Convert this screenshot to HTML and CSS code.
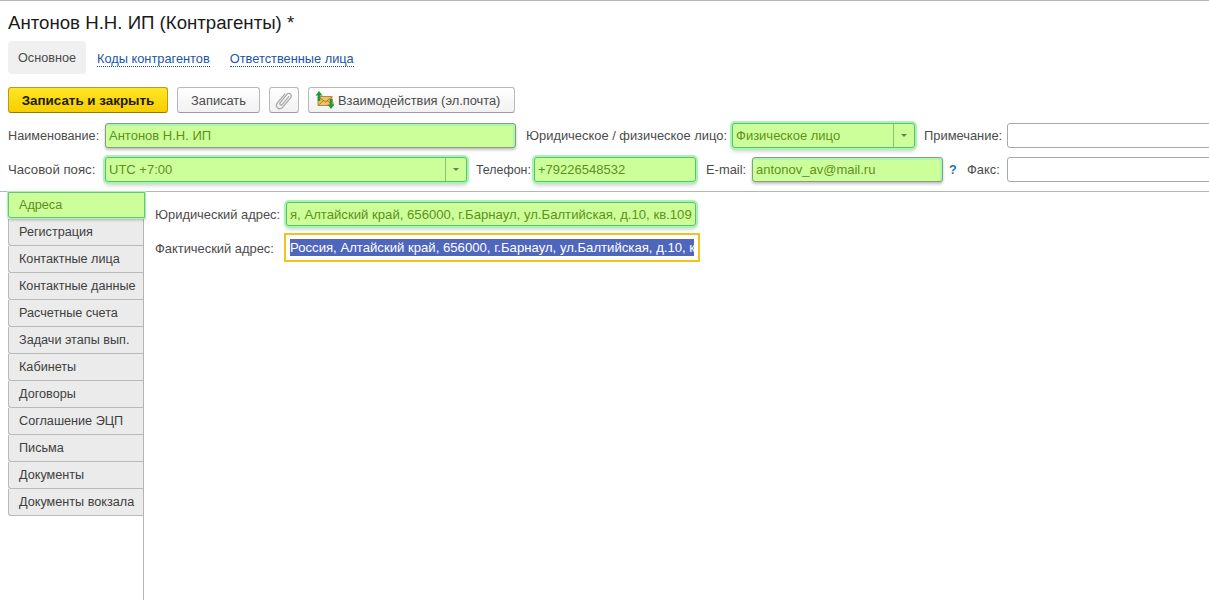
FILE: index.html
```html
<!DOCTYPE html>
<html lang="ru">
<head>
<meta charset="utf-8">
<title>Антонов Н.Н. ИП (Контрагенты)</title>
<link rel="stylesheet" href="styles.css">
</head>
<body>
<div class="page">
  <h1 class="title">Антонов Н.Н. ИП (Контрагенты) *</h1>
  <nav class="pages">
    <span class="page-tab">Основное</span>
    <a class="page-link link-a">Коды контрагентов</a>
    <a class="page-link link-b">Ответственные лица</a>
  </nav>
  <div class="toolbar">
    <button class="btn btn-primary">Записать и закрыть</button>
    <button class="btn btn-save">Записать</button>
    <button class="btn btn-clip" aria-label="Вложения">
      <svg width="20" height="20" viewBox="0 0 20 20" fill="none" stroke="#a9a9a9" stroke-width="1.3" stroke-linecap="round"><path d="M6.200 12.600 12.700 4.600c1-1.200 2.600-1.400 3.700-.5s1.200 2.500.2 3.700l-7.800 9.400c-1.500 1.800-3.800 2-5.200.8s-1.500-3.500 0-5.300l7.300-8.800"/><path d="M6.200 12.600c-.6.8-.5 1.700.1 2.200s1.500.4 2.100-.4l6.400-7.700"/></svg>
    </button>
    <button class="btn btn-mail">
      <svg width="22" height="20" viewBox="0 0 22 20"><path d="M4 6.500 17.500 6.500 19.500 15.500H4z" fill="#efc268" stroke="#b98a35"/><path d="M4 6.500l7.500 5.500 7-5.500M4 15.500l5.500-5M19 15.500l-6-5" fill="none" stroke="#a87a2c"/><path d="M5 1 1.500 5.500h2.300V11h2.500V5.500h2.300z" fill="#1f9a3c"/><path d="M17 19l3.500-4.500h-2.300V9h-2.500v5.500h-2.300z" fill="#1f9a3c"/></svg>
      <span>Взаимодействия (эл.почта)</span>
    </button>
  </div>
  <div class="form-row row-one">
    <label class="lbl lbl-name">Наименование:</label>
    <div class="field ok inner w-name"><span class="val">Антонов Н.Н. ИП</span></div>
    <label class="lbl lbl-type">Юридическое / физическое лицо:</label>
    <div class="field ok w-type"><span class="val">Физическое лицо</span><span class="drop"><i class="tri"></i></span></div>
    <label class="lbl lbl-note">Примечание:</label>
    <div class="field blank"></div>
  </div>
  <div class="form-row row-two">
    <label class="lbl lbl-tz">Часовой пояс:</label>
    <div class="field ok w-tz"><span class="val">UTC +7:00</span><span class="drop"><i class="tri"></i></span></div>
    <label class="lbl lbl-tel">Телефон:</label>
    <div class="field ok w-tel"><span class="val">+79226548532</span></div>
    <label class="lbl lbl-mail">E-mail:</label>
    <div class="field ok inner w-mail"><span class="val">antonov_av@mail.ru</span></div>
    <span class="help">?</span>
    <label class="lbl lbl-fax">Факс:</label>
    <div class="field blank"></div>
  </div>
  <div class="body">
    <ul class="side">
      <li class="side-item active">Адреса</li>
      <li class="side-item">Регистрация</li>
      <li class="side-item">Контактные лица</li>
      <li class="side-item">Контактные данные</li>
      <li class="side-item">Расчетные счета</li>
      <li class="side-item">Задачи этапы вып.</li>
      <li class="side-item">Кабинеты</li>
      <li class="side-item">Договоры</li>
      <li class="side-item">Соглашение ЭЦП</li>
      <li class="side-item">Письма</li>
      <li class="side-item">Документы</li>
      <li class="side-item">Документы вокзала</li>
    </ul>
    <div class="panel">
      <div class="addr-row addr-one">
        <label class="lbl addr-lbl">Юридический адрес:</label>
        <div class="field ok addr-field"><span class="val clip">я, Алтайский край, 656000, г.Барнаул, ул.Балтийская, д.10, кв.109</span></div>
      </div>
      <div class="addr-row addr-two">
        <label class="lbl addr-lbl">Фактический адрес:</label>
        <div class="field focus"><span class="clip-box"><span class="sel">Россия, Алтайский край, 656000, г.Барнаул, ул.Балтийская, д.10, кв.109</span></span></div>
      </div>
    </div>
  </div>
</div>
</body>
</html>
```
FILE: styles.css
```css
* { box-sizing: border-box; }
html, body { margin: 0; height: 100%; overflow: hidden; background: #fff; }
body { font-family: "Liberation Sans", Arial, sans-serif; font-size: 12.65px; color: #4b4b4b; }
.page { height: 600px; width: 1209px; border-top: 1px solid #b5b5b5; overflow: hidden; }
.title { margin: 0; padding: 11px 0 0 8px; height: 40px; font-size: 18.65px; line-height: 21px; font-weight: 400; color: #1a1a1a; }
.pages { display: flex; align-items: center; height: 33px; padding-left: 8px; }
.page-tab { width: 78px; height: 33px; line-height: 34px; text-align: center; background: #f0f0f0; border-radius: 4px; color: #4a4a4a; }
.page-link { font-size: 12.8px; color: #1c55a8; border-bottom: 1px dotted #1c55a8; line-height: 14px; margin-top: 3px; }
.link-a { margin-left: 11px; }
.link-b { margin-left: 20px; }
.toolbar { display: flex; height: 26px; margin-top: 13px; padding-left: 8px; }
.btn { height: 26px; padding: 1px 0 0; font: 12.85px "Liberation Sans", Arial, sans-serif; line-height: 25px; color: #4b4b4b; background: linear-gradient(#fff, #f1f1f1); border: 1px solid #b8b8b8; border-bottom-color: #9c9c9c; border-radius: 3px; display: flex; align-items: center; justify-content: center; }
.btn-primary { width: 160px; font-size: 13.4px; font-weight: 700; color: #1e1a00; background: linear-gradient(#ffe625, #f5cf00); border-color: #b99c11; border-bottom-color: #8f7b10; }
.btn-save { width: 83px; margin-left: 9px; }
.btn-clip { width: 30px; margin-left: 9px; padding: 0; }
.btn-mail { width: 207px; margin-left: 9px; gap: 2px; justify-content: flex-start; padding: 0 0 0 5px; }
.btn-mail span { padding-top: 1px; }
.form-row { display: flex; align-items: center; height: 26px; padding-left: 8px; width: 1400px; }
.row-one { margin-top: 9px; }
.row-two { margin-top: 8px; }
.lbl { font-size: 12.9px; padding-top: 1px; white-space: nowrap; color: #4b4b4b; flex: none; }
.lbl-name { font-size: 12.65px; width: 97px; }
.lbl-tz { font-size: 13.2px; width: 97px; }
.lbl-type { margin-left: 10px; width: 206px; }
.lbl-note { margin-left: 9px; width: 83px; }
.lbl-tel { font-size: 12.4px; margin-left: 9px; width: 58px; }
.lbl-mail { margin-left: 10px; width: 46px; }
.lbl-fax { margin-left: 10px; width: 40px; }
.help { margin-left: 6px; width: 8px; color: #1a76b8; font-weight: 700; padding-top: 1px; }
.field { flex: none; height: 25px; display: flex; align-items: center; border-radius: 3px; font-size: 13px; }
.ok { background: #ccff99; border: 1px solid #62bb72; box-shadow: 0 0 0 2px #a4f7b0, 0 3px 4px rgba(0,0,0,.22); color: #5f8f1c; }
.ok.inner { border-color: #8a9a84; box-shadow: inset 0 2px 0 #a8f9ae, inset -2px 0 0 #a8f9ae, 0 2px 3px rgba(0,0,0,.25); }
.blank { width: 300px; background: #fff; border: 1px solid #a8a8a8; }
.val { padding: 1px 0 0 3px; flex: 1; white-space: nowrap; }
.drop { width: 21px; height: 100%; border-left: 1px solid #93bf6c; display: flex; align-items: center; justify-content: center; }
.tri { width: 0; height: 0; border: 3px solid transparent; border-top: 3px solid #6c7f50; border-bottom: 0; }
.w-name { width: 411px; }
.w-type { width: 183px; }
.w-tz { width: 362px; }
.w-tel { width: 162px; }
.w-mail { width: 191px; }
.body { display: flex; margin-top: 9px; border-top: 1px solid #b5b5b5; height: 410px; }
.side { list-style: none; margin: 0; padding: 0 0 0 8px; width: 144px; flex: none; border-right: 1px solid #b5b5b5; }
.side-item { height: 27px; line-height: 26px; padding-left: 10px; background: #ebebeb; border: 1px solid #b9b9b9; border-right: 0; border-top: 0; border-radius: 0 0 0 3px; color: #404040; white-space: nowrap; }
.side-item.active { width: 137px; height: 26px; margin-bottom: 1px; line-height: 25px; position: relative; background: #ccff99; color: #5f8f1c; border: 1px solid #6fbf7c; box-shadow: 0 0 0 1px #a4f7b0, 0 2px 3px rgba(0,0,0,.25); }
.panel { padding: 10px 0 0 11px; flex: 1; min-width: 0; }
.addr-row { display: flex; align-items: center; }
.addr-lbl { width: 131px; }
.addr-two { margin-top: 7px; }
.addr-field { width: 410px; overflow: hidden; height: 24px; font-size: 13.15px; }
.clip { padding-left: 3px; overflow: hidden; }
.focus { width: 416px; height: 29px; margin-left: -2px; border: 2px solid #f3c21e; border-radius: 0; padding: 0 4px; background: #fff; font-size: 13.15px; }
.clip-box { display: block; width: 100%; overflow: hidden; white-space: nowrap; line-height: 17px; }
.sel { background: #4f66bd; color: #fff; display: inline-block; line-height: 17px; }
```
